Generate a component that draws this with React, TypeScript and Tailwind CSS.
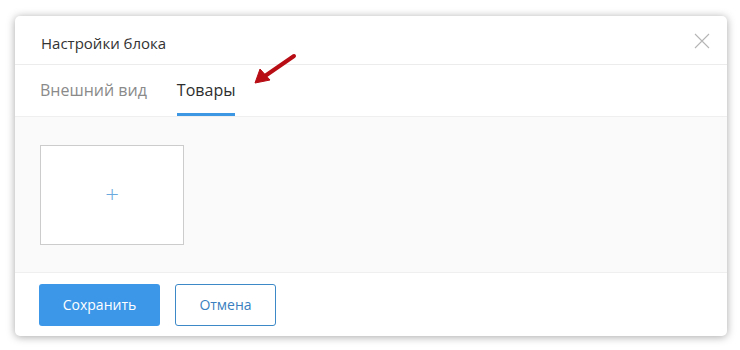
import React from "react";

export default function App() {
  return (
    <div
      className="relative w-[740px] h-[350px] bg-white pt-[16px] pl-[15px]"
      style={{ fontFamily: '"Open Sans", "Noto Sans", sans-serif' }}
    >
      <div className="w-[712px] h-[320px] bg-white rounded-[5px] shadow-[0_1px_8px_rgba(0,0,0,0.35)] flex flex-col overflow-hidden">
        {/* header */}
        <div className="h-[49px] flex items-center justify-between pl-[26px] pr-[17px] border-b border-[#ececec] shrink-0">
          <span className="text-[15px] text-[#333] pt-[6px]">Настройки блока</span>
          <svg width="16" height="16" viewBox="0 0 16 16" className="mt-[2px]">
            <path d="M1 1 L15 15 M15 1 L1 15" stroke="#b5b5b5" strokeWidth="1.1" />
          </svg>
        </div>
        {/* tabs */}
        <div className="h-[52px] flex items-end gap-[30px] pl-[25px] border-b border-[#efefef] shrink-0">
          <div className="h-full flex items-center text-[16px] text-[#8a8a8a] pb-[1px]">Внешний вид</div>
          <div className="h-full flex flex-col justify-between">
            <div className="flex-1 flex items-center text-[16px] font-medium text-[#2e2e2e] pt-[2px]">Товары</div>
            <div className="h-[3px] bg-[#3d97e3]" />
          </div>
        </div>
        {/* content */}
        <div className="flex-1 bg-[#fafafa] pl-[25px] pt-[28px]">
          <div className="w-[144px] h-[100px] bg-white border border-[#cccccc] flex items-center justify-center text-[#6aa9de] text-[24px] font-light pb-[3px]">
            +
          </div>
        </div>
        {/* footer */}
        <div className="h-[64px] border-t border-[#efefef] flex items-center gap-[15px] pl-[24px] shrink-0">
          <button className="w-[121px] h-[42px] rounded-[3px] bg-[#3d97e8] text-white text-[14px]">
            Сохранить
          </button>
          <button className="w-[101px] h-[42px] rounded-[3px] border border-[#3d89c8] bg-white text-[#3a7fc0] text-[14px]">
            Отмена
          </button>
        </div>
      </div>
      {/* annotation arrow */}
      <svg className="absolute left-[250px] top-[50px]" width="50" height="38" viewBox="0 0 50 38">
        <path d="M44 6 L15 26" stroke="#b80d14" strokeWidth="4" strokeLinecap="round" />
        <path d="M5 33 L10 19 L20 30 Z" fill="#b80d14" stroke="#b80d14" strokeWidth="1" strokeLinejoin="round" />
      </svg>
    </div>
  );
}
